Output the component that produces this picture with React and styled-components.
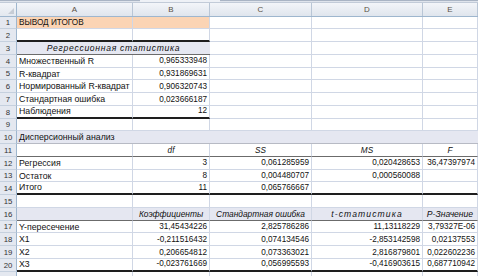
import React from 'react';
import styled, { createGlobalStyle } from 'styled-components';

const GlobalStyle = createGlobalStyle`
  html, body {
    margin: 0;
    padding: 0;
    background: #fff;
    overflow: hidden;
  }
`;

const COLS = '17px 116px 77px 102px 111px 55px';
const GRID = '#d0d7e5';
const LAV = '#e5e7f1';
const PEACH = '#fbd4b4';

const Sheet = styled.div`
  width: 478px;
  font-family: "Liberation Sans", Arial, sans-serif;
  font-size: 8.2px;
  color: #111;
`;

const TopStrip = styled.div`
  height: 3px;
  background: linear-gradient(to bottom, #a9b4c4 0, #a9b4c4 1px, #dfe4ec 1px, #dfe4ec 2px, #c2cbd8 2px);
  position: relative;
`;

const Tab = styled.div`
  position: absolute;
  left: 140px;
  top: 0;
  width: 80px;
  height: 2px;
  background: #eef1f6;
`;

const HeaderRow = styled.div`
  display: grid;
  grid-template-columns: ${COLS};
  height: 13.5px;
  border-bottom: 1px solid #9eb6ce;
  box-sizing: border-box;
`;

const Corner = styled.div`
  background: linear-gradient(to bottom, #f3f5f9, #e3e8ef);
  border-right: 1px solid #9eb6ce;
  position: relative;
  &::after {
    content: '';
    position: absolute;
    right: 2px;
    bottom: 2px;
    border-left: 6px solid transparent;
    border-bottom: 6px solid #c6ccd5;
  }
`;

const ColHead = styled.div`
  background: linear-gradient(to bottom, #f3f5f9 0%, #e9edf3 50%, #dfe5ed 100%);
  border-right: 1px solid #b9c6d6;
  color: #5a5044;
  font-size: 8px;
  display: flex;
  align-items: center;
  justify-content: center;
  padding-top: 1px;
`;

const Row = styled.div`
  display: grid;
  grid-template-columns: ${COLS};
  height: 12.75px;
`;

const RowNum = styled.div`
  background: #e4e8f0;
  border-right: 1px solid #9eb6ce;
  border-bottom: 1px solid #c5d0de;
  box-sizing: border-box;
  color: #333;
  font-size: 7.8px;
  display: flex;
  align-items: flex-end;
  justify-content: center;
  padding-bottom: 1px;
`;

const borderFor = (b) => {
  if (b === 'thick') return '2px solid #1e1e1e';
  if (b === 'thin') return '1px solid #6b6b6b';
  if (b === 'light') return '1px solid #b7bac4';
  return `1px solid ${GRID}`;
};

const Cell = styled.div`
  grid-column: span ${(p) => p.$span || 1};
  background: ${(p) => p.$bg || '#fff'};
  border-right: ${(p) => (p.$noGrid ? 'none' : `1px solid ${GRID}`)};
  border-bottom: ${(p) => borderFor(p.$bottom)};
  box-sizing: border-box;
  display: flex;
  align-items: flex-end;
  justify-content: ${(p) =>
    p.$align === 'right' ? 'flex-end' : p.$align === 'center' ? 'center' : 'flex-start'};
  font-style: ${(p) => (p.$italic ? 'italic' : 'normal')};
  font-size: ${(p) => p.$size || 8.2}px;
  letter-spacing: ${(p) => p.$spacing || 0}px;
  padding: 0 2px 1px 2px;
  white-space: nowrap;
  overflow: visible;
  line-height: 1;
`;

const letters = ['A', 'B', 'C', 'D', 'E'];

const lab = (v) => ({ text: v, size: 8.75 });
const num = (v) => ({ text: v, align: 'right' });
const head = (v, size, spacing) => ({ text: v, align: 'center', italic: true, size, spacing });

const rows = [
  { cells: [{ text: 'ВЫВОД ИТОГОВ', bg: PEACH }, { bg: PEACH }, {}, {}, {}] },
  { cells: [{ bottom: 'thick' }, { bottom: 'thick' }, {}, {}, {}] },
  {
    cells: [
      { ...head('Регрессионная статистика', 8.6, 0.7), span: 2, bg: LAV, bottom: 'thin', noGrid: true },
      {}, {}, {},
    ],
  },
  { cells: [lab('Множественный R'), num('0,965333948'), {}, {}, {}] },
  { cells: [lab('R-квадрат'), num('0,931869631'), {}, {}, {}] },
  { cells: [lab('Нормированный R-квадрат'), num('0,906320743'), {}, {}, {}] },
  { cells: [lab('Стандартная ошибка'), num('0,023666187'), {}, {}, {}] },
  { cells: [{ ...lab('Наблюдения'), bottom: 'thick' }, { ...num('12'), bottom: 'thick' }, {}, {}, {}] },
  { cells: [{}, {}, {}, {}, {}] },
  { cells: [{ ...lab('Дисперсионный анализ'), span: 5, bg: LAV, noGrid: true, bottom: 'light' }] },
  {
    cells: [{ bottom: 'thin' }, { ...head('df'), bottom: 'thin' }, { ...head('SS'), bottom: 'thin' },
      { ...head('MS'), bottom: 'thin' }, { ...head('F'), bottom: 'thin' }],
  },
  { cells: [lab('Регрессия'), num('3'), num('0,061285959'), num('0,020428653'), num('36,47397974')] },
  { cells: [lab('Остаток'), num('8'), num('0,004480707'), num('0,000560088'), {}] },
  {
    cells: [{ ...lab('Итого'), bottom: 'thick' }, { ...num('11'), bottom: 'thick' },
      { ...num('0,065766667'), bottom: 'thick' }, { bottom: 'thick' }, { bottom: 'thick' }],
  },
  { cells: [{}, {}, {}, {}, {}] },
  {
    cells: [{ bg: LAV, bottom: 'thin' }, { ...head('Коэффициенты', 8.4), bg: LAV, bottom: 'thin' },
      { ...head('Стандартная ошибка', 8.4), bg: LAV, bottom: 'thin' },
      { ...head('t-статистика', 8.6, 1.1), bg: LAV, bottom: 'thin' },
      { ...head('P-Значение', 8.6), bg: LAV, bottom: 'thin' }],
  },
  { cells: [lab('Y-пересечение'), num('31,45434226'), num('2,825786286'), num('11,13118229'), num('3,79327E-06')] },
  { cells: [lab('X1'), num('-0,211516432'), num('0,074134546'), num('-2,853142598'), num('0,02137553')] },
  { cells: [lab('X2'), num('0,206654812'), num('0,073363021'), num('2,816879801'), num('0,022602236')] },
  {
    cells: [{ ...lab('X3'), bottom: 'thick' }, { ...num('-0,023761669'), bottom: 'thick' },
      { ...num('0,056995593'), bottom: 'thick' }, { ...num('-0,416903615'), bottom: 'thick' },
      { ...num('0,687710942'), bottom: 'thick' }],
  },
  { cells: [{}, {}, {}, {}, {}] },
];

export default function App() {
  return (
    <>
      <GlobalStyle />
      <Sheet>
        <TopStrip>
          <Tab />
        </TopStrip>
        <HeaderRow>
          <Corner />
          {letters.map((l) => (
            <ColHead key={l}>{l}</ColHead>
          ))}
        </HeaderRow>
        {rows.map((row, r) => (
          <Row key={r}>
            <RowNum>{r < 20 ? r + 1 : ''}</RowNum>
            {row.cells.map((c, i) => (
              <Cell
                key={i}
                $span={c.span}
                $bg={c.bg}
                $bottom={c.bottom}
                $align={c.align}
                $italic={c.italic}
                $noGrid={c.noGrid}
                $size={c.size}
                $spacing={c.spacing}
              >
                {c.text}
              </Cell>
            ))}
          </Row>
        ))}
      </Sheet>
    </>
  );
}
